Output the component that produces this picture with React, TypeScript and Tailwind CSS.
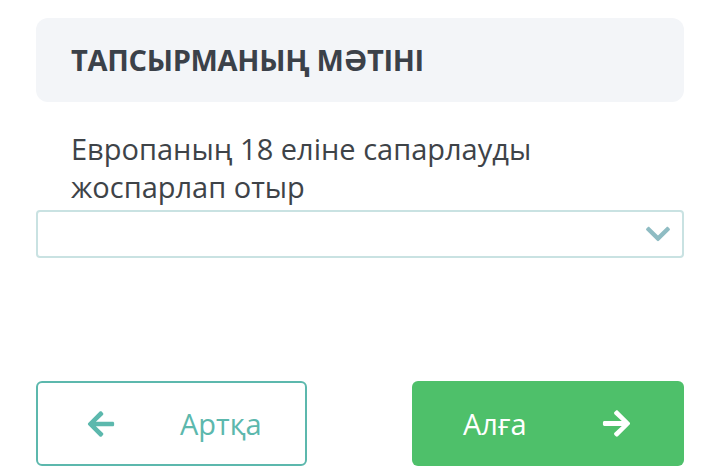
import { FaArrowLeft, FaArrowRight, FaChevronDown } from "react-icons/fa";

function App() {
  return (
    <div
      className="w-[720px] h-[467px] bg-white px-9 pt-[18px] overflow-hidden"
      style={{ fontFamily: '"Open Sans", "Noto Sans", sans-serif' }}
    >
      <div className="h-[84px] rounded-xl bg-[#f3f5f8] flex items-center pl-[35px]">
        <h2 className="text-[29px] font-bold text-[#3b4149] tracking-[-0.3px]">
          ТАПСЫРМАНЫҢ МӘТІНІ
        </h2>
      </div>

      <p className="mt-[28px] pl-[35px] w-[520px] text-[29px] leading-[38px] text-[#3e4348]">
        Европаның 18 еліне сапарлауды жоспарлап отыр
      </p>

      <div className="mt-[4px] h-[48px] rounded border-2 border-[#c9e2e2] flex items-center justify-end pr-[10px]">
        <FaChevronDown className="text-[#8fbcc3] w-[28px] h-[28px]" />
      </div>

      <div className="mt-[123px] flex justify-between">
        <button className="w-[271px] h-[85px] rounded-md border-2 border-[#5cb8ad] flex items-center pl-[48px] text-[#5cb8ad]">
          <FaArrowLeft className="w-[30px] h-[30px]" />
          <span className="ml-[64px] text-[29px]">Артқа</span>
        </button>
        <button className="w-[272px] h-[85px] rounded-md bg-[#4ec06a] flex items-center pl-[51px] text-white">
          <span className="text-[29px]">Алға</span>
          <FaArrowRight className="ml-[74px] w-[31px] h-[31px]" />
        </button>
      </div>
    </div>
  );
}

export default App;
